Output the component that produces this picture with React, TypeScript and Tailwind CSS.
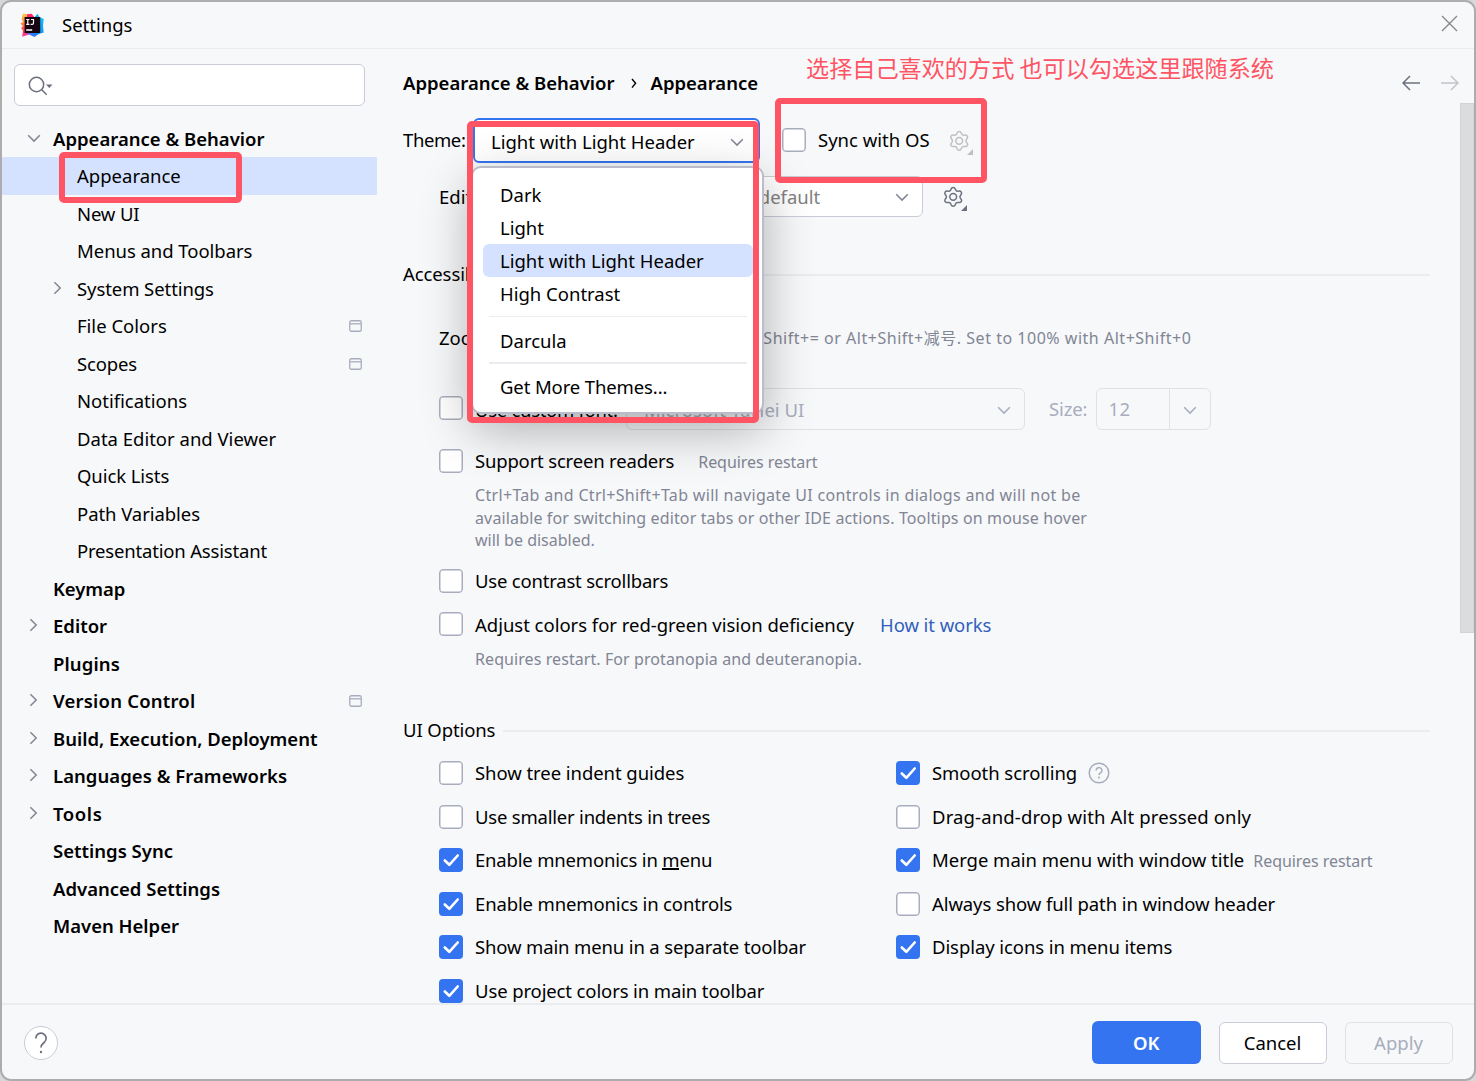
import React from "react";

type IconProps = { className?: string };

const ChevronDown = ({ className = "" }: IconProps) => (
  <svg width="14" height="14" viewBox="0 0 14 14" fill="none" className={`shrink-0 ${className}`}>
    <path d="M1.2 4.3 7 10.1 12.8 4.3" stroke="currentColor" strokeWidth="1.5" />
  </svg>
);

const ChevronRight = ({ className = "" }: IconProps) => (
  <svg width="14" height="14" viewBox="0 0 14 14" fill="none" className={`shrink-0 ${className}`}>
    <path d="M3.4 1.2 9.2 7 3.4 12.8" stroke="currentColor" strokeWidth="1.5" />
  </svg>
);

const ProjectBadge = () => (
  <svg width="13" height="12" viewBox="0 0 13 12" fill="none" className="ml-auto mr-3.5 shrink-0 text-[#a8adbd]">
    <rect x=".75" y=".75" width="11.5" height="10.5" rx="1.6" stroke="currentColor" strokeWidth="1.3" />
    <path d="M1 3.8h11" stroke="currentColor" strokeWidth="1.3" />
  </svg>
);

const Gear = ({ className = "" }: IconProps) => (
  <svg width="26" height="26" viewBox="0 0 26 26" fill="none" className={`shrink-0 ${className}`}>
    <path
      d="M10.1 3C10.5 1.9 11.3 1.4 12.2 1.4S13.9 1.9 14.3 3l.3.8c.4 1 1.3 1.5 2.3 1.4l.9-.1c1.1-.2 2 .2 2.5 1s.4 1.8-.3 2.6l-.6.8c-.6.8-.6 1.900 0 2.700l.6.7c.7.9.8 1.900.3 2.700s-1.400 1.100-2.500 1l-.9-.2c-1-.1-1.900.4-2.300 1.400l-.3.9c-.4 1-1.200 1.600-2.100 1.600s-1.700-.6-2.100-1.600l-.3-.9c-.4-1-1.300-1.500-2.300-1.400l-.9.2c-1.100.1-2-.2-2.500-1s-.4-1.800.3-2.700l.6-.7c.6-.8.6-1.900 0-2.700l-.6-.8c-.7-.8-.8-1.800-.3-2.600s1.400-1.200 2.500-1l.9.1c1 .1 1.900-.4 2.300-1.400z"
      stroke="currentColor"
      strokeWidth="1.5"
    />
    <circle cx="12.2" cy="10.85" r="3.4" stroke="currentColor" strokeWidth="1.5" />
    <path d="M26 19v6h-6z" fill="currentColor" />
  </svg>
);

const Logo = () => (
  <svg width="24" height="25" viewBox="0 0 24 25" className="shrink-0">
    <defs>
      <linearGradient id="warm" x1="0" y1="0" x2="0" y2="1">
        <stop offset="0" stopColor="#ffc94a" />
        <stop offset=".4" stopColor="#ff8a3c" />
        <stop offset=".75" stopColor="#fe3a57" />
        <stop offset="1" stopColor="#f83ba8" />
      </linearGradient>
      <linearGradient id="cool" x1="0" y1="1" x2="1" y2="0">
        <stop offset="0" stopColor="#6a5cf5" />
        <stop offset=".4" stopColor="#0a8bff" />
        <stop offset="1" stopColor="#19c8f5" />
      </linearGradient>
    </defs>
    <path d="M3 .6 9 1.500v20L2.200 23.700 3 17.500 1 15l2-1.800L.4 10.500 3 9 1.600 6z" fill="url(#warm)" />
    <path d="M7 1.200 11.500.8 14 3.500 13 6H7z" fill="#fe2a6b" />
    <path d="M17.500.8 19.500 4l4.200 2L23 13l.7 6.500-5 1.500L14.500 24 7 20.500 14 5z" fill="url(#cool)" />
    <rect x="4.600" y="4" width="15.600" height="16" fill="#160510" />
    <path d="M6.200 6.500h3.200M7.800 6.500v4.800M6.200 11.300h3.200M11 6.500h2.500v3.400q0 1.400-1.400 1.400h-1.500" stroke="#fff" strokeWidth="1.200" fill="none" />
    <path d="M6.200 17h6" stroke="#fff" strokeWidth="1.300" />
  </svg>
);

const Check = ({ on = false, className = "" }: { on?: boolean; className?: string }) =>
  on ? (
    <span className={`flex size-6 shrink-0 items-center justify-center rounded-[4px] bg-[#3574f0] ${className}`}>
      <svg width="24" height="24" viewBox="0 0 24 24" fill="none">
        <path d="m5.8 12.5 4.5 4.3L18.7 7.5" stroke="#fff" strokeWidth="2.6" strokeLinecap="round" strokeLinejoin="round" />
      </svg>
    </span>
  ) : (
    <span className={`size-6 shrink-0 rounded-[4px] border border-[#a8adbd] bg-white shadow-[inset_0_0_0_0.5px_#a8adbd] ${className}`} />
  );

type TreeItem = { label: string; level?: 1; arrow?: "down" | "right"; badge?: boolean; selected?: boolean; track?: string };

const tree: TreeItem[] = [
  { label: "Appearance & Behavior", arrow: "down" },
  { label: "Appearance", level: 1, selected: true },
  { label: "New UI", level: 1, track: "tracking-[-0.15px]" },
  { label: "Menus and Toolbars", level: 1, track: "tracking-[-0.04px]" },
  { label: "System Settings", level: 1, arrow: "right", track: "tracking-[-0.08px]" },
  { label: "File Colors", level: 1, badge: true },
  { label: "Scopes", level: 1, badge: true, track: "tracking-[-0.15px]" },
  { label: "Notifications", level: 1 },
  { label: "Data Editor and Viewer", level: 1 },
  { label: "Quick Lists", level: 1, track: "tracking-[-0.08px]" },
  { label: "Path Variables", level: 1, track: "tracking-[-0.06px]" },
  { label: "Presentation Assistant", level: 1, track: "tracking-[-0.18px]" },
  { label: "Keymap", track: "tracking-[-0.1px]" },
  { label: "Editor", arrow: "right" },
  { label: "Plugins", track: "tracking-[0.1px]" },
  { label: "Version Control", arrow: "right", badge: true, track: "tracking-[0.2px]" },
  { label: "Build, Execution, Deployment", arrow: "right" },
  { label: "Languages & Frameworks", arrow: "right", track: "tracking-[0.04px]" },
  { label: "Tools", arrow: "right", track: "tracking-[0.6px]" },
  { label: "Settings Sync" },
  { label: "Advanced Settings" },
  { label: "Maven Helper" },
];

const TreeRow = ({ item }: { item: TreeItem }) => (
  <div
    className={`flex shrink-0 items-center pr-px ${item.level ? "pl-[49px]" : "pl-[25px]"} ${
      item.selected ? "-mt-px h-[38.5px] bg-[#d4e2ff] pt-px" : "h-[37.5px]"
    }`}
  >
    <span className="flex w-[26px] shrink-0 text-[#818594]">
      {item.arrow === "down" && <ChevronDown className="relative -top-px" />}
      {item.arrow === "right" && <ChevronRight className="relative -top-px" />}
    </span>
    <span className={`${item.level ? "" : "font-semibold"} ${item.track ?? ""}`}>{item.label}</span>
    {item.badge && <ProjectBadge />}
  </div>
);

const Section = ({ title, className }: { title: string; className: string }) => (
  <div className={`flex h-7 shrink-0 items-center gap-2 ${className}`}>
    <span className="tracking-[-0.1px]">{title}</span>
    <span className="mt-0.5 h-0.5 flex-1 bg-[#ebecf0]" />
  </div>
);

const Hint = ({ children, className = "" }: { children: React.ReactNode; className?: string }) => (
  <span className={`text-[16px] text-[#818594] ${className}`}>{children}</span>
);

type Option = { label: React.ReactNode; on?: boolean; extra?: React.ReactNode; track?: string };

const leftOptions: Option[] = [
  { label: "Show tree indent guides", track: "tracking-[-0.06px]" },
  { label: "Use smaller indents in trees", track: "tracking-[-0.21px]" },
  {
    label: (
      <>
        Enable mnemonics in <span className="inline-block h-[21px] border-b-2 border-black align-top">m</span>enu
      </>
    ),
    on: true,
    track: "tracking-[-0.18px]",
  },
  { label: "Enable mnemonics in controls", on: true, track: "tracking-[-0.14px]" },
  { label: "Show main menu in a separate toolbar", on: true, track: "tracking-[-0.14px]" },
  { label: "Use project colors in main toolbar", on: true, track: "tracking-[-0.12px]" },
];

const rightOptions: Option[] = [
  {
    label: "Smooth scrolling",
    on: true,
    track: "tracking-[-0.06px]",
    extra: (
      <svg width="22" height="22" viewBox="0 0 22 22" fill="none" className="ml-[11px] text-[#a8adbd]">
        <circle cx="11" cy="11" r="9.8" stroke="currentColor" strokeWidth="1.5" />
        <path d="M8.1 8.5a2.900 2.900 0 1 1 4.500 2.400c-1 .7-1.600 1.100-1.600 2.200" stroke="currentColor" strokeWidth="1.5" />
        <circle cx="11" cy="15.500" r="1" fill="currentColor" />
      </svg>
    ),
  },
  { label: "Drag-and-drop with Alt pressed only", track: "tracking-[0.14px]" },
  {
    label: "Merge main menu with window title",
    on: true,
    track: "tracking-[-0.03px]",
    extra: <Hint className="ml-[9px] mt-px tracking-[-0.06px]">Requires restart</Hint>,
  },
  { label: "Always show full path in window header", track: "tracking-[-0.1px]" },
  { label: "Display icons in menu items", on: true, track: "tracking-[-0.08px]" },
];

const OptionColumn = ({ items }: { items: Option[] }) => (
  <div className="flex w-[457px] flex-col">
    {items.map((o, i) => (
      <div key={i} className="flex h-[43.5px] shrink-0 items-center">
        <Check on={o.on} />
        <span className={`ml-3 ${o.track ?? ""}`}>{o.label}</span>
        {o.extra}
      </div>
    ))}
  </div>
);

const MenuItem = ({ children, selected = false }: { children: React.ReactNode; selected?: boolean }) => (
  <div className={`ml-2.5 mr-[9px] flex h-[33px] items-center rounded-md pl-[17px] ${selected ? "bg-[#d4e2ff]" : ""}`}>
    {children}
  </div>
);

export default function App() {
  return (
    <div className="relative h-[1081px] w-[1476px] overflow-hidden bg-[#d8d8d8] font-['Noto_Sans','Noto_Sans_CJK_SC',sans-serif] text-[18.5px] leading-[22px] whitespace-nowrap text-black">
      <div className="flex h-full flex-col overflow-hidden rounded-[11px] border-2 border-[#adadad] bg-[#f7f8fa]">
        <header className="flex h-[47px] shrink-0 items-center border-b border-[#ebecf0] pl-[18px] pr-4">
          <Logo />
          <span className="ml-[18px]">Settings</span>
          <svg width="17" height="17" viewBox="0 0 17 17" className="relative -top-0.5 ml-auto text-[#888]">
            <path d="m1 1 15 15M16 1 1 16" stroke="currentColor" strokeWidth="1.4" />
          </svg>
        </header>

        <div className="flex min-h-0 flex-1">
          <aside className="flex w-[375px] shrink-0 flex-col">
            <div className="mx-3 mb-3.5 mt-[15px] flex h-[42px] w-[351px] shrink-0 items-center rounded-md border-[1.5px] border-[#c9ccd6] bg-white pl-[13px]">
              <svg width="26" height="20" viewBox="0 0 26 20" fill="none" className="mt-px text-[#6c707e]">
                <circle cx="8.5" cy="8.5" r="7.2" stroke="currentColor" strokeWidth="1.5" />
                <path d="m13.7 13.7 5 5" stroke="currentColor" strokeWidth="1.5" />
                <path d="M18 8.5h6.5l-3.2 3.5z" fill="currentColor" />
              </svg>
            </div>
            {tree.map((item) => (
              <TreeRow key={item.label} item={item} />
            ))}
          </aside>

          <main className="flex min-w-0 flex-1 flex-col overflow-hidden pl-[26px]">
            <div className="flex h-[68px] shrink-0 items-center font-semibold">
              <span>Appearance &amp; Behavior</span>
              <svg width="8" height="12" viewBox="0 0 8 12" fill="none" className="ml-[17px] mr-[11px]">
                <path d="m1 2 3.6 4.3L1 10.6" stroke="#000" strokeWidth="1.4" />
              </svg>
              <span>Appearance</span>
              <svg width="18" height="16" viewBox="0 0 18 16" fill="none" className="ml-auto text-[#6c707e]">
                <path d="M8 1 1 8l7 7M1 8h17" stroke="currentColor" strokeWidth="1.5" />
              </svg>
              <svg width="18" height="16" viewBox="0 0 18 16" fill="none" className="ml-[21px] mr-[15px] text-[#c3c4c9]">
                <path d="m10 1 7 7-7 7M17 8H0" stroke="currentColor" strokeWidth="1.5" />
              </svg>
            </div>

            <div className="flex min-h-0 flex-1">
              <div className="mr-[30px] flex min-w-0 flex-1 flex-col">
                <div className="flex h-[47px] shrink-0 items-center">
                  <span className="mb-0.5 w-[70px] tracking-[-0.4px]">Theme:</span>
                  <div className="relative h-[45px] w-[287px]">
                    <div className="flex h-full items-center rounded-md border-[2.5px] border-[#3574f0] bg-white pl-4 pr-3.5">
                      <span className="relative top-px">Light with Light Header</span>
                      <ChevronDown className="relative top-px ml-auto text-[#818594]" />
                    </div>
                    <div className="absolute -left-0.5 top-12 z-10 h-[248px] w-[293px] rounded-[10px] border-2 border-[#b9bdc9] bg-white pt-2.5 shadow-[0_16px_50px_rgba(0,0,0,0.3)]">
                      <MenuItem>Dark</MenuItem>
                      <MenuItem>Light</MenuItem>
                      <MenuItem selected>Light with Light Header</MenuItem>
                      <MenuItem>High Contrast</MenuItem>
                      <div className="mb-[7px] ml-4 mr-[15px] mt-1.5 h-px bg-[#ebecf0]" />
                      <MenuItem>Darcula</MenuItem>
                      <div className="mb-1.5 ml-4 mr-[15px] mt-[5px] h-0.5 bg-[#ebecf0]" />
                      <MenuItem>
                        <span className="tracking-[-0.12px]">Get More Themes...</span>
                      </MenuItem>
                    </div>
                  </div>
                  <Check className="mb-0.5 ml-[22px]" />
                  <span className="mb-0.5 ml-3">Sync with OS</span>
                  <Gear className="ml-[17px] mt-1 text-[#bfc0c3]" />
                </div>

                <div className="ml-9 mt-3 flex h-[41px] shrink-0 items-center">
                  <span className="w-[110px]">Editor</span>
                  <div className="flex h-full w-[374px] items-center rounded-md border-[1.5px] border-[#c9ccd6] bg-white pl-[160px] pr-[13px]">
                    <span className="text-[#818181]">Light default</span>
                    <ChevronDown className="ml-auto text-[#818594]" />
                  </div>
                  <Gear className="ml-[17.5px] mt-1 text-[#6c707e]" />
                </div>

                <Section title="Accessibility" className="mt-[43px]" />

                <div className="ml-9 mt-[34px] flex h-8 shrink-0 items-center">
                  <span className="mb-px w-[293px]">Zoom:</span>
                  <Hint className="tracking-[0.52px]">Alt+Shift+= or Alt+Shift+减号. Set to 100% with Alt+Shift+0</Hint>
                </div>

                <div className="ml-9 mt-[34px] flex h-[43px] shrink-0 items-center">
                  <Check className="mb-[3px]" />
                  <span className="ml-3 w-[151px] tracking-[-0.3px]">Use custom font:</span>
                  <div className="mb-px flex h-[42px] w-[399px] items-center rounded-md border-[1.5px] border-[#dfe1e5] pl-[17px] pr-[13px] text-[#a8adbd]">
                    <span className="relative top-px">Microsoft YaHei UI</span>
                    <ChevronDown className="relative top-px ml-auto" />
                  </div>
                  <span className="mb-px ml-6 w-[46.5px] tracking-[-0.15px] text-[#a8adbd]">Size:</span>
                  <div className="mb-px flex h-[42px] w-[115.5px] items-center rounded-md border-[1.5px] border-[#dfe1e5] text-[#a8adbd]">
                    <span className="flex h-full w-[73px] items-center border-r-[1.5px] border-[#dfe1e5] pl-3 tracking-[0.4px]">12</span>
                    <ChevronDown className="relative top-px ml-[13px]" />
                  </div>
                </div>

                <div className="ml-9 mt-4 flex h-7 shrink-0 items-center">
                  <Check />
                  <span className="ml-3 tracking-[-0.18px]">Support screen readers</span>
                  <Hint className="ml-6 mt-px tracking-[-0.05px]">Requires restart</Hint>
                </div>
                <div className="ml-[72px] mt-[9px] flex shrink-0 flex-col text-[16px] leading-[22.5px] text-[#818594]">
                  <span className="tracking-[0.32px]">Ctrl+Tab and Ctrl+Shift+Tab will navigate UI controls in dialogs and will not be</span>
                  <span className="tracking-[0.14px]">available for switching editor tabs or other IDE actions. Tooltips on mouse hover</span>
                  <span>will be disabled.</span>
                </div>
                <div className="ml-9 mt-[15.5px] flex h-7 shrink-0 items-center">
                  <Check />
                  <span className="ml-3 tracking-[-0.2px]">Use contrast scrollbars</span>
                </div>
                <div className="ml-9 mt-4 flex h-7 shrink-0 items-center">
                  <Check className="mb-0.5" />
                  <span className="ml-3 tracking-[-0.02px]">Adjust colors for red-green vision deficiency</span>
                  <span className="ml-[26px] tracking-[-0.08px] text-[#315fbd]">How it works</span>
                </div>
                <div className="ml-[72px] mt-2 h-[22px] shrink-0">
                  <Hint className="tracking-[0.08px]">Requires restart. For protanopia and deuteranopia.</Hint>
                </div>

                <Section title="UI Options" className="mt-[47px]" />

                <div className="ml-9 mt-[7.5px] flex min-h-0 flex-1">
                  <OptionColumn items={leftOptions} />
                  <OptionColumn items={rightOptions} />
                </div>
              </div>
              <div className="-mt-3.5 h-[530px] w-3.5 shrink-0 border border-[#d3d3d4] bg-[#dbdcdd]" />
            </div>
          </main>
        </div>

        <footer className="flex h-[76px] shrink-0 items-center gap-[18px] border-t-2 border-[#ebecf0] pl-[22px] pr-[21.5px] pt-px">
          <span className="mr-auto flex size-[34px] items-center justify-center rounded-full border-[1.5px] border-[#c9ccd6] bg-white">
            <svg width="14" height="24" viewBox="0 0 14 24" fill="none" className="text-[#6c707e]">
              <path d="M1.8 7.500V7a5.200 5.200 0 1 1 8.500 4.300C8.300 13 7 14 7 16.500" stroke="currentColor" strokeWidth="1.7" />
              <circle cx="7" cy="21" r="1.200" fill="currentColor" />
            </svg>
          </span>
          <button className="h-[43px] w-[108.5px] rounded-md bg-[#3574f0] font-semibold text-white">OK</button>
          <button className="h-[42px] w-[108px] rounded-md border-[1.5px] border-[#c9ccd6] bg-white">Cancel</button>
          <button className="h-[42px] w-[108px] rounded-md border-[1.5px] border-[#dfe1e5] text-[#a8adbd]">Apply</button>
        </footer>
      </div>

      <div className="absolute left-[59px] top-[152px] z-20 h-[51px] w-[183px] rounded-[5px] border-[6px] border-[#ff5464]" />
      <div className="absolute left-[467px] top-[121px] z-20 h-[302px] w-[292px] rounded-[5px] border-[6px] border-[#ff5464]" />
      <div className="absolute left-[775px] top-[98px] z-20 h-[85px] w-[212px] rounded-[5px] border-[6px] border-[#ff5464]" />
      <div className="absolute left-[806px] top-[53px] z-20 font-['Noto_Sans_CJK_SC',sans-serif] text-[23.15px] leading-[28px] text-[#ff5464]">
        选择自己喜欢的方式 也可以勾选这里跟随系统
      </div>
    </div>
  );
}
